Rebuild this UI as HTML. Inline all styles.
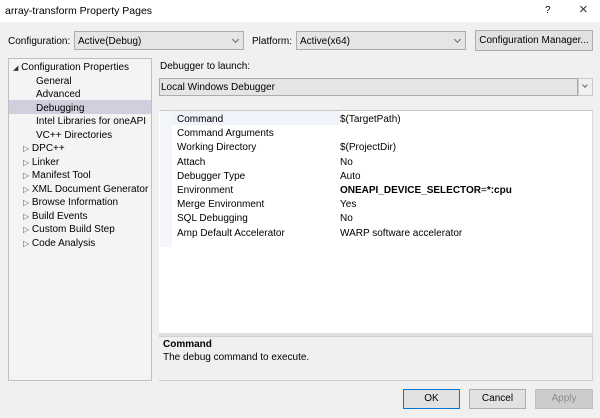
<!DOCTYPE html>
<html><head><style>
*{margin:0;padding:0;box-sizing:border-box}
body{width:600px;height:418px;background:#f0f0f0;font-family:"Liberation Sans",sans-serif;font-size:10px;color:#000;position:relative;overflow:hidden}
.a{position:absolute;white-space:nowrap}
.combo{position:absolute;background:#e5e5e5;border:1px solid #acacac}
.chev{position:absolute;width:5px;height:5px;border-right:1px solid #666;border-bottom:1px solid #666;transform:rotate(45deg)}
.btn{position:absolute;background:#e1e1e1;border:1px solid #adadad;text-align:center;line-height:18px;white-space:nowrap}
.tr{position:absolute;left:0;white-space:nowrap}
</style></head><body>
<div class="a" style="left:0;top:0;width:600px;height:22px;background:#fff"></div>
<div class="a" style="left:5px;top:5px;font-size:10.5px">array-transform Property Pages</div>
<div class="a" style="left:545px;top:5px;font-size:10px">?</div>
<div class="a" style="left:579px;top:1px;font-size:15px;color:#333">×</div>

<div class="a" style="left:8px;top:36px">Configuration:</div>
<div class="combo" style="left:74px;top:31px;width:170px;height:19px"></div>
<div class="a" style="left:78px;top:36px">Active(Debug)</div>
<div class="chev" style="left:233px;top:37px"></div>
<div class="a" style="left:252px;top:36px">Platform:</div>
<div class="combo" style="left:296px;top:31px;width:170px;height:19px"></div>
<div class="a" style="left:300px;top:36px">Active(x64)</div>
<div class="chev" style="left:455px;top:37px"></div>
<div class="btn" style="left:475px;top:30px;width:118px;height:21px;line-height:19px">Configuration Manager...</div>

<div class="a" style="left:8px;top:58px;width:144px;height:323px;background:#f4f4f4;border:1px solid #bfc0c6"></div>
<div class="a" style="left:9px;top:100px;width:142px;height:14px;background:#cfcfdd"></div>
<div class="a" style="left:13px;top:62px;width:140px">
<div class="tr" style="top:0"><span style="font-size:7px;color:#333">◢</span> Configuration Properties</div>
<div class="tr" style="top:13.5px;left:23px">General</div>
<div class="tr" style="top:27px;left:23px">Advanced</div>
<div class="tr" style="top:40.5px;left:23px">Debugging</div>
<div class="tr" style="top:54px;left:23px">Intel Libraries for oneAPI</div>
<div class="tr" style="top:67.5px;left:23px">VC++ Directories</div>
<div class="tr" style="top:81px;left:10px"><span style="font-size:8px;color:#555">▷</span> DPC++</div>
<div class="tr" style="top:94.5px;left:10px"><span style="font-size:8px;color:#555">▷</span> Linker</div>
<div class="tr" style="top:108px;left:10px"><span style="font-size:8px;color:#555">▷</span> Manifest Tool</div>
<div class="tr" style="top:121.5px;left:10px"><span style="font-size:8px;color:#555">▷</span> XML Document Generator</div>
<div class="tr" style="top:135px;left:10px"><span style="font-size:8px;color:#555">▷</span> Browse Information</div>
<div class="tr" style="top:148.5px;left:10px"><span style="font-size:8px;color:#555">▷</span> Build Events</div>
<div class="tr" style="top:162px;left:10px"><span style="font-size:8px;color:#555">▷</span> Custom Build Step</div>
<div class="tr" style="top:175.5px;left:10px"><span style="font-size:8px;color:#555">▷</span> Code Analysis</div>
</div>

<div class="a" style="left:160px;top:61px">Debugger to launch:</div>
<div class="combo" style="left:159px;top:78px;width:419px;height:18px"></div>
<div class="a" style="left:161px;top:82px">Local Windows Debugger</div>
<div class="a" style="left:578px;top:78px;width:15px;height:18px;background:#f0f0f0;border:1px solid #c8c8c8"></div>
<div class="chev" style="left:583px;top:83px;width:4px;height:4px"></div>

<div class="a" style="left:159px;top:110px;width:434px;height:223px;background:#fff;border-top:1px solid #c8c8c8;border-right:1px solid #d8d8d8"></div>
<div class="a" style="left:160px;top:111px;width:12px;height:136px;background:#f4f6fa"></div>
<div class="a" style="left:172px;top:111px;width:168px;height:14px;background:#f0f3fa"></div>
<div class="a" style="left:177px;top:113px;line-height:14.2px">Command<br>Command Arguments<br>Working Directory<br>Attach<br>Debugger Type<br>Environment<br>Merge Environment<br>SQL Debugging<br>Amp Default Accelerator</div>
<div class="a" style="left:340px;top:113px;line-height:14.2px">$(TargetPath)<br>&nbsp;<br>$(ProjectDir)<br>No<br>Auto<br><b>ONEAPI_DEVICE_SELECTOR</b>=<b>*:cpu</b><br>Yes<br>No<br>WARP software accelerator</div>
<div class="a" style="left:159px;top:333px;width:434px;height:3px;background:#e0e0e0"></div>
<div class="a" style="left:159px;top:336px;width:434px;height:45px;border:1px solid #d0d0d0;border-left:none"></div>
<div class="a" style="left:163px;top:339px;font-weight:bold">Command</div>
<div class="a" style="left:163px;top:352px">The debug command to execute.</div>

<div class="btn" style="left:403px;top:389px;width:57px;height:20px;border:1px solid #0078d7">OK</div>
<div class="btn" style="left:469px;top:389px;width:57px;height:20px">Cancel</div>
<div class="btn" style="left:535px;top:389px;width:58px;height:20px;background:#ccc;border-color:#bfbfbf;color:#8d8d8d">Apply</div>
</body></html>
